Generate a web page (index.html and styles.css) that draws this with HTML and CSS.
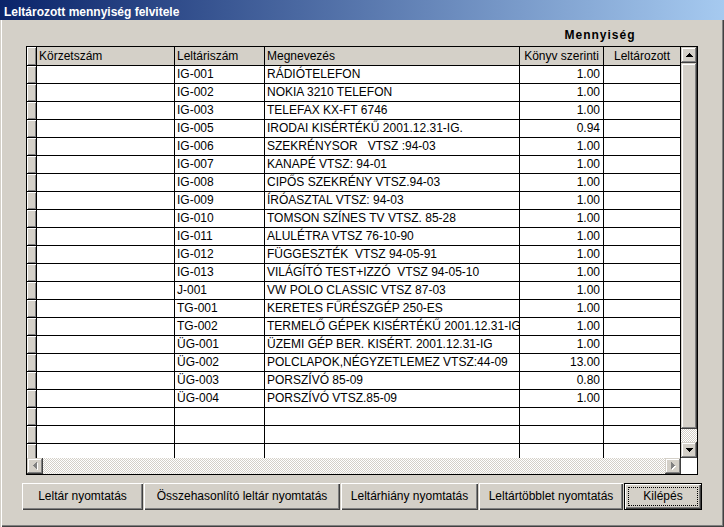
FILE: index.html
```html
<!DOCTYPE html>
<html lang="hu">
<head>
<meta charset="utf-8">
<title>Leltározott mennyiség felvitele</title>
<link rel="stylesheet" href="styles.css">
</head>
<body>
<div class="window">
  <div class="titlebar">Leltározott mennyiség felvitele</div>
  <div class="client">
    <div class="group-row"><div class="group-label">Mennyiség</div></div>
    <div class="grid">
      <div class="grid-main">
        <div class="grid-table">
          <div class="row head">
            <div class="ind"></div>
            <div class="c">Körzetszám</div>
            <div class="c">Leltáriszám</div>
            <div class="c">Megnevezés</div>
            <div class="c ctr">Könyv szerinti</div>
            <div class="c ctr">Leltározott</div>
          </div>
          <div class="rows">
            <div class="row"><div class="ind"></div><div class="c"></div><div class="c">IG-001</div><div class="c">RÁDIÓTELEFON</div><div class="c num">1.00</div><div class="c"></div></div>
            <div class="row"><div class="ind"></div><div class="c"></div><div class="c">IG-002</div><div class="c">NOKIA 3210 TELEFON</div><div class="c num">1.00</div><div class="c"></div></div>
            <div class="row"><div class="ind"></div><div class="c"></div><div class="c">IG-003</div><div class="c">TELEFAX KX-FT 6746</div><div class="c num">1.00</div><div class="c"></div></div>
            <div class="row"><div class="ind"></div><div class="c"></div><div class="c">IG-005</div><div class="c">IRODAI KISÉRTÉKŰ 2001.12.31-IG.</div><div class="c num">0.94</div><div class="c"></div></div>
            <div class="row"><div class="ind"></div><div class="c"></div><div class="c">IG-006</div><div class="c">SZEKRÉNYSOR   VTSZ :94-03</div><div class="c num">1.00</div><div class="c"></div></div>
            <div class="row"><div class="ind"></div><div class="c"></div><div class="c">IG-007</div><div class="c">KANAPÉ VTSZ: 94-01</div><div class="c num">1.00</div><div class="c"></div></div>
            <div class="row"><div class="ind"></div><div class="c"></div><div class="c">IG-008</div><div class="c">CIPŐS SZEKRÉNY VTSZ.94-03</div><div class="c num">1.00</div><div class="c"></div></div>
            <div class="row"><div class="ind"></div><div class="c"></div><div class="c">IG-009</div><div class="c">ÍRÓASZTAL VTSZ: 94-03</div><div class="c num">1.00</div><div class="c"></div></div>
            <div class="row"><div class="ind"></div><div class="c"></div><div class="c">IG-010</div><div class="c">TOMSON SZÍNES TV VTSZ. 85-28</div><div class="c num">1.00</div><div class="c"></div></div>
            <div class="row"><div class="ind"></div><div class="c"></div><div class="c">IG-011</div><div class="c">ALULÉTRA VTSZ 76-10-90</div><div class="c num">1.00</div><div class="c"></div></div>
            <div class="row"><div class="ind"></div><div class="c"></div><div class="c">IG-012</div><div class="c">FÜGGESZTÉK  VTSZ 94-05-91</div><div class="c num">1.00</div><div class="c"></div></div>
            <div class="row"><div class="ind"></div><div class="c"></div><div class="c">IG-013</div><div class="c">VILÁGÍTÓ TEST+IZZÓ  VTSZ 94-05-10</div><div class="c num">1.00</div><div class="c"></div></div>
            <div class="row"><div class="ind"></div><div class="c"></div><div class="c">J-001</div><div class="c">VW POLO CLASSIC VTSZ 87-03</div><div class="c num">1.00</div><div class="c"></div></div>
            <div class="row"><div class="ind"></div><div class="c"></div><div class="c">TG-001</div><div class="c">KERETES FŰRÉSZGÉP 250-ES</div><div class="c num">1.00</div><div class="c"></div></div>
            <div class="row"><div class="ind"></div><div class="c"></div><div class="c">TG-002</div><div class="c">TERMELŐ GÉPEK KISÉRTÉKŰ 2001.12.31-IG</div><div class="c num">1.00</div><div class="c"></div></div>
            <div class="row"><div class="ind"></div><div class="c"></div><div class="c">ÜG-001</div><div class="c">ÜZEMI GÉP BER. KISÉRT. 2001.12.31-IG</div><div class="c num">1.00</div><div class="c"></div></div>
            <div class="row"><div class="ind"></div><div class="c"></div><div class="c">ÜG-002</div><div class="c">POLCLAPOK,NÉGYZETLEMEZ VTSZ:44-09</div><div class="c num">13.00</div><div class="c"></div></div>
            <div class="row"><div class="ind"></div><div class="c"></div><div class="c">ÜG-003</div><div class="c">PORSZÍVÓ 85-09</div><div class="c num">0.80</div><div class="c"></div></div>
            <div class="row"><div class="ind"></div><div class="c"></div><div class="c">ÜG-004</div><div class="c">PORSZÍVÓ VTSZ.85-09</div><div class="c num">1.00</div><div class="c"></div></div>
            <div class="row"><div class="ind"></div><div class="c"></div><div class="c"></div><div class="c"></div><div class="c num"></div><div class="c"></div></div>
            <div class="row"><div class="ind"></div><div class="c"></div><div class="c"></div><div class="c"></div><div class="c num"></div><div class="c"></div></div>
            <div class="row"><div class="ind"></div><div class="c"></div><div class="c"></div><div class="c"></div><div class="c num"></div><div class="c"></div></div>
          </div>
        </div>
        <div class="vscroll">
          <div class="sbtn"><svg width="7" height="4" viewBox="0 0 7 4"><path d="M3 0h1v1h1v1h1v1h1v1H0V3h1V2h1V1h1z" fill="#000"/></svg></div>
          <div class="vtrack"><div class="vthumb"></div></div>
          <div class="sbtn"><svg width="7" height="4" viewBox="0 0 7 4"><path d="M0 0h7v1H6v1H5v1H4v1H3V3H2V2H1V1H0z" fill="#000"/></svg></div>
        </div>
      </div>
      <div class="hscroll">
        <div class="sbtn"><svg width="5" height="8" viewBox="0 0 5 8"><path d="M4 1h1v7H4V7H3V6H2V5H1V4h1V3h1V2h1z" fill="#fff"/><path d="M3 0h1v7H3V6H2V5H1V4H0V3h1V2h1V1h1z" fill="#808080"/></svg></div>
        <div class="htrack"></div>
        <div class="sbtn"><svg width="5" height="8" viewBox="0 0 5 8"><path d="M1 1h1v1h1v1h1v1h1v1H4v1H3v1H2v1H1z" fill="#fff"/><path d="M0 0h1v1h1v1h1v1h1v1H3v1H2v1H1v1H0z" fill="#808080"/></svg></div>
        <div class="corner"></div>
      </div>
    </div>
    <div class="buttons">
      <div class="btn w1">Leltár nyomtatás</div>
      <div class="btn w2">Összehasonlító leltár nyomtatás</div>
      <div class="btn w3">Leltárhiány nyomtatás</div>
      <div class="btn w4">Leltártöbblet nyomtatás</div>
      <div class="btn w5 default">Kilépés</div>
    </div>
  </div>
</div>
</body>
</html>
```
FILE: styles.css
```css
* { box-sizing: border-box; }
html, body { margin: 0; padding: 0; }
body {
  background: #d4d0c8;
  font-family: "Liberation Sans", Arial, sans-serif;
  font-size: 12px;
  color: #000;
}
.window {
  width: 724px;
  height: 527px;
  background: #d4d0c8;
  box-shadow: inset 1px 0 #d4d0c8, inset 2px 0 #fff, inset -1px -1px #404040, inset -2px -2px #808080;
  overflow: hidden;
}
.titlebar {
  height: 20px;
  padding: 2px 0 0 4px;
  line-height: 20px;
  font-weight: bold;
  color: #fff;
  background: linear-gradient(to right, #0a246a, #a6caf0);
  white-space: nowrap;
}
.client {
  padding-top: 8px;
}
.group-row {
  display: flex;
  justify-content: flex-end;
  padding-right: 44px;
  margin-bottom: 4px;
}
.group-label {
  width: 160px;
  text-align: center;
  font-weight: bold;
  letter-spacing: 1px;
  line-height: 14px;
  height: 14px;
}
.grid {
  margin-left: 26px;
  width: 672px;
  border: 1px solid #000;
  background: #d4d0c8;
}
.grid-main {
  display: flex;
  height: 411px;
}
.grid-table {
  width: 654px;
  display: flex;
  flex-direction: column;
}
.rows {
  height: 392px;
  overflow: hidden;
}
.row {
  display: grid;
  grid-template-columns: 10px 138px 90px 255px 84px 77px;
  height: 18px;
  border-bottom: 1px solid #000;
  line-height: 17px;
}
.row.head {
  height: 19px;
  line-height: 18px;
}
.ind {
  border-right: 1px solid #000;
  background: #d4d0c8;
  box-shadow: inset 1px 1px #fff, inset -1px -1px #808080;
}
.c {
  border-right: 1px solid #000;
  background: #fff;
  padding: 0 2px;
  white-space: pre;
  overflow: hidden;
}
.head .c {
  background: #d4d0c8;
}
.c.ctr { text-align: center; }
.c.num { text-align: right; padding-right: 3px; }

.vscroll {
  width: 16px;
  display: flex;
  flex-direction: column;
}
.sbtn {
  width: 16px;
  height: 16px;
  flex: none;
  background: #d4d0c8;
  display: flex;
  align-items: center;
  justify-content: center;
  box-shadow: inset -1px -1px #404040, inset 1px 1px #d4d0c8, inset -2px -2px #808080, inset 2px 2px #fff;
}
.sbtn svg { display: block; }
.vtrack {
  flex: 1;
  background: repeating-conic-gradient(#d4d0c8 0 25%, #fff 0 50%) 0 0 / 2px 2px;
}
.vthumb {
  height: 366px;
  background: #d4d0c8;
  box-shadow: inset -1px -1px #404040, inset 1px 1px #d4d0c8, inset -2px -2px #808080, inset 2px 2px #fff;
}
.hscroll {
  display: flex;
  height: 16px;
}
.htrack {
  flex: 1;
  background: repeating-conic-gradient(#d4d0c8 0 25%, #fff 0 50%) 0 0 / 2px 2px;
}
.corner {
  width: 16px;
  height: 16px;
  background: #fff;
}
.buttons {
  display: flex;
  gap: 1px;
  margin: 8px 0 0 22px;
}
.btn {
  height: 27px;
  line-height: 27px;
  text-align: center;
  white-space: nowrap;
  background: #d4d0c8;
  box-shadow: inset 1px 1px #fff, inset -1px -1px #404040, inset -2px -2px #808080;
}
.w1 { width: 121px; }
.w2 { width: 196px; }
.w3 { width: 137px; }
.w4 { width: 144px; }
.w5 { width: 78px; }
.btn.default {
  position: relative;
  border: 1px solid #000;
  line-height: 25px;
  box-shadow: inset 1px 1px #fff, inset -1px -1px #404040, inset -2px -2px #808080;
}
.btn.default::after {
  content: "";
  position: absolute;
  inset: 3px;
  border: 1px dotted #000;
}
```
